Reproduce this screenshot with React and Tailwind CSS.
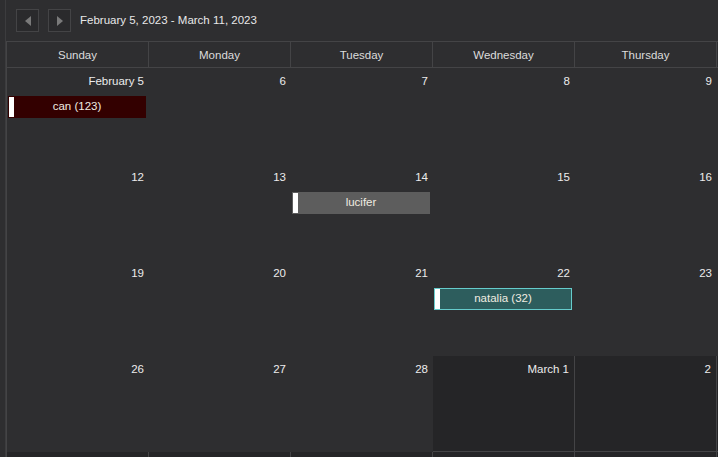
import React from "react";

const DAYS = ["Sunday", "Monday", "Tuesday", "Wednesday", "Thursday", "Friday", "Saturday"];

const WEEKS = [
  [{ d: "February 5" }, { d: "6" }, { d: "7" }, { d: "8" }, { d: "9" }, { d: "10" }, { d: "11" }],
  [{ d: "12" }, { d: "13" }, { d: "14" }, { d: "15" }, { d: "16" }, { d: "17" }, { d: "18" }],
  [{ d: "19" }, { d: "20" }, { d: "21" }, { d: "22" }, { d: "23" }, { d: "24" }, { d: "25" }],
  [{ d: "26" }, { d: "27" }, { d: "28" }, { d: "March 1", off: true }, { d: "2", off: true }, { d: "3", off: true }, { d: "4", off: true }],
  [{ d: "5", off: true }, { d: "6", off: true }, { d: "7", off: true }, { d: "8", off: true }, { d: "9", off: true }, { d: "10", off: true }, { d: "11", off: true }],
];

// events keyed by week/day
const EVENTS = {
  "0-0": { text: "can (123)", cls: "bg-[#330000] border-[#330000]" },
  "1-2": { text: "lucifer", cls: "bg-[#5d5d5d] border-[#5d5d5d]" },
  "2-3": { text: "natalia (32)", cls: "bg-[#2d5d5d] border-[#66cccc]" },
};

const font = { fontFamily: '"Liberation Sans", "DejaVu Sans", sans-serif' };

function NavButton({ dir }) {
  return (
    <button className="w-[23px] h-[23px] border border-[#444446] bg-[#2a2a2c] flex items-center justify-center">
      <svg width="8" height="10" viewBox="0 0 8 10">
        {dir === "left" ? <polygon points="7,0 7,10 1,5" fill="#7a7a7a" /> : <polygon points="1,0 1,10 7,5" fill="#7a7a7a" />}
      </svg>
    </button>
  );
}

export default function App() {
  return (
    <div className="w-[718px] h-[457px] overflow-hidden bg-[#2e2e30] text-[#e6e6e6] text-[11.5px]" style={font}>
      <div className="ml-[5px] h-full border-l border-[#3c3c3e]">
        {/* toolbar */}
        <div className="h-[41px] flex items-center gap-[9px] pl-[10px]">
          <NavButton dir="left" />
          <NavButton dir="right" />
          <span className="text-[#e8e8e8]">February 5, 2023 - March 11, 2023</span>
        </div>

        <div className="w-[996px] border-l border-[#444446]">
          {/* header */}
          <div className="grid grid-cols-[repeat(7,142px)] border-t border-b border-[#444446] h-[27px]">
            {DAYS.map((d) => (
              <div key={d} className="flex items-center justify-center pt-[2px] border-r border-[#444446] text-[#dcdcdc]">{d}</div>
            ))}
          </div>

          {/* weeks */}
          {WEEKS.map((week, wi) => (
            <div key={wi} className="grid grid-cols-[repeat(7,142px)] h-[96px]">
              {week.map((c, di) => {
                const ev = EVENTS[`${wi}-${di}`];
                return (
                  <div
                    key={di}
                    className={c.off ? "bg-[#252527] border-r border-b border-[#444446] flex flex-col" : "border-b border-transparent flex flex-col"}
                  >
                    <div className="h-[28px] flex items-center justify-end pr-[5px] text-[#ececec]">{c.d}</div>
                    {ev && (
                      <div className={`ml-[1px] mr-[3px] h-[22px] border flex items-center ${ev.cls}`}>
                        <div className="w-[5px] h-full bg-white" />
                        <div className="flex-1 text-center text-[#f0ece0] pr-[5px]">{ev.text}</div>
                      </div>
                    )}
                  </div>
                );
              })}
            </div>
          ))}
        </div>
      </div>
    </div>
  );
}
